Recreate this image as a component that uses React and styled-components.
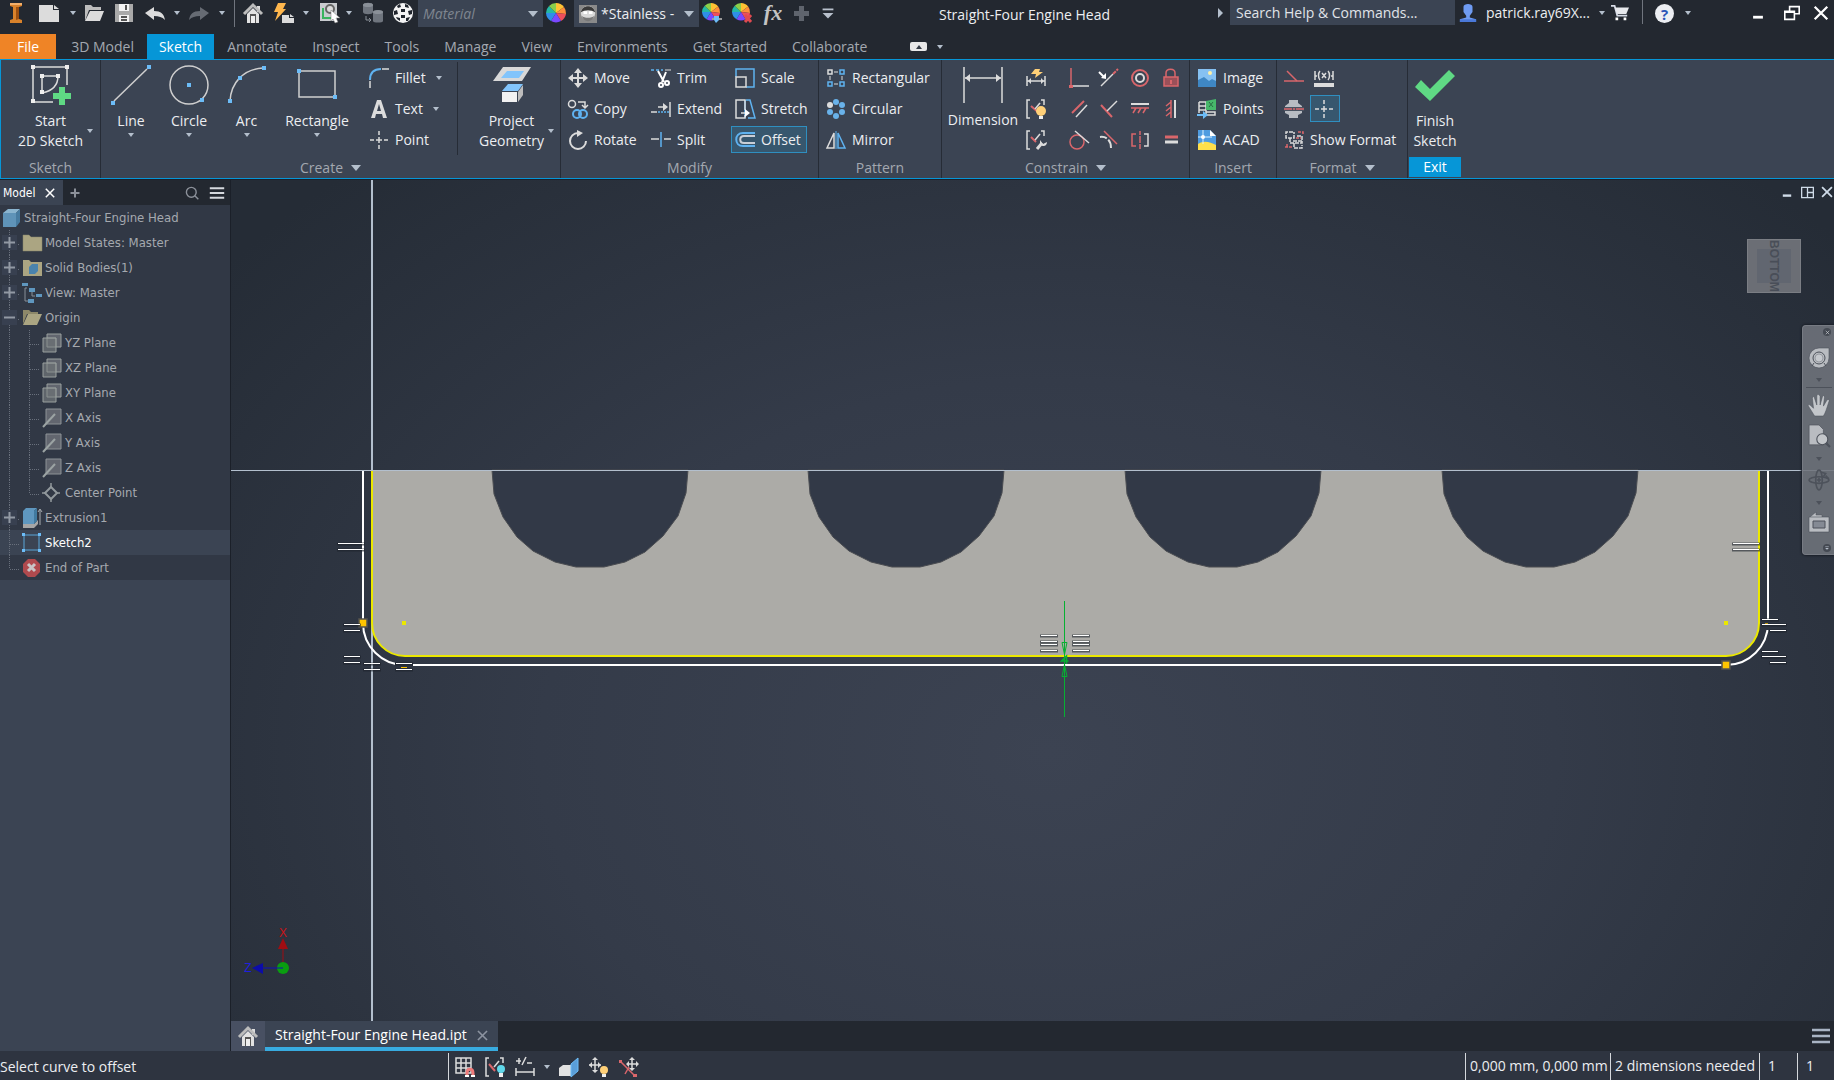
import React from "react";
import styled, { createGlobalStyle, css } from "styled-components";

const W = "#dcdcdc";
const B = "#6cbcf7";
const R = "#d9666b";
const G = "#5fd984";

const icons = {
  logo: (
    <>
      <path d="M4 0h12v3l-3 1v12l3 1v3H4v-3l3-1V4L4 3z" fill="#d9822b" />
      <path d="M10 4h3v12l-3 1z" fill="#9c4f10" />
      <path d="M4 0h12v2H4z" fill="#f3b06b" />
    </>
  ),
  newDoc: <path d="M0 2h14v5h6v12H0zM15 2l5 4h-5z" fill={W} />,
  open: (
    <>
      <path d="M1 2h6l2 2h8v3H5L1 18z" fill="#bdbdbd" />
      <path d="M6 8h14l-4 10H1z" fill={W} />
    </>
  ),
  save: (
    <>
      <path d="M1 1h18v18H1z" fill="#a9a9a9" />
      <path d="M5 1h10v7H5zM5 12h10v7H5z" fill="#f2f2f2" />
      <path d="M12 2v5M7 14h6M7 17h6" stroke="#555" strokeWidth="2" />
    </>
  ),
  undo: <path d="M0 10l9-6v4c7 0 10 3 11 9-3-3-6-4-11-4v4z" fill={W} />,
  redo: <path d="M20 10l-9-6v4C4 8 1 11 0 17c3-3 6-4 11-4v4z" fill="#666b73" />,
  home: (
    <>
      <path d="M14 3h3v6h-3z" fill={W} />
      <path d="M1 11l9-9 9 9" fill="none" stroke="#bcbcbc" strokeWidth="3" />
      <path d="M4 11l6-6 6 6v9H4z" fill="#e2e2e2" />
      <path d="M7 11h6v9H7z" fill="#555" />
      <path d="M8 13h4v7H8z" fill="#eee" />
    </>
  ),
  bolt: (
    <>
      <path d="M4 0h8L9 6h3L1 18l3-9H0z" fill="#ffb74d" />
      <path d="M8 12h7v3h5v5H8zM16 11l4 3h-4z" fill={W} />
    </>
  ),
  select: (
    <>
      <path d="M0 0h17v18H0z" fill="#c9ccd0" />
      <path d="M3 5v10h9" stroke="#39b45e" strokeWidth="2" fill="none" />
      <circle cx="10" cy="6" r="4" stroke="#666" strokeWidth="2" fill="#ddd" />
      <path d="M11 7l9 8h-4l2 4-3 1-2-4-2 2z" fill="#fff" stroke="#777" strokeWidth=".5" />
    </>
  ),
  cylinders: (
    <>
      <path d="M0 2c0-3 10-3 10 0v7c0 3-10 3-10 0z" fill="#6f757e" />
      <path d="M10 9c0-2 10-2 10 0v9c0 2-10 2-10 0z" fill="#6f757e" />
      <ellipse cx="5" cy="2" rx="5" ry="2" fill="#8a9098" />
      <ellipse cx="15" cy="9" rx="5" ry="2" fill="#8a9098" />
      <path d="M3 13v4h5M6 15l2 2-2 2" stroke="#8a9098" fill="none" />
    </>
  ),
  ball: (
    <>
      <circle cx="10" cy="10" r="10" fill="#f4f4f4" />
      <path
        d="M4 3l3-2 1 3-3 1zM12 1l3 1 1 3-4-1zM8 6h4v3H8zM1 8l3-1 1 4-4 1zM15 8l4-1v4l-3 1zM8 12h4v3H8zM3 14l4 1v3l-3-2zM13 15l4-1-2 4-2 0z"
        fill="#1f242c"
      />
    </>
  ),
  wheel: (
    <>
      <path d="M10 10L10 0A10 10 0 0 1 18 4z" fill="#ffc233" />
      <path d="M10 10L18 4A10 10 0 0 1 20 11z" fill="#ff8f3c" />
      <path d="M10 10L20 11A10 10 0 0 1 15 18z" fill="#ee4f5b" />
      <path d="M10 10L15 18A10 10 0 0 1 5 18z" fill="#7b48ff" />
      <path d="M10 10L5 18A10 10 0 0 1 0 10z" fill="#2f8ee8" />
      <path d="M10 10L0 10A10 10 0 0 1 3 3z" fill="#25b9a5" />
      <path d="M10 10L3 3A10 10 0 0 1 10 0z" fill="#8bcf4a" />
    </>
  ),
  metal: (
    <>
      <path d="M0 0h20v20H0z" fill="#8a8a8a" />
      <circle cx="10" cy="9" r="8" fill="#d9d9d9" />
      <path d="M2 8c2-9 14-9 16 0-4-3-12-3-16 0z" fill="#3a3a3a" />
      <path d="M5 7h4v3H5zM11 7h4v3h-4z" fill="#fff" />
      <path d="M3 12c3 3 11 3 14 0-2 8-12 8-14 0z" fill="#777" />
    </>
  ),
  plus: <path d="M8 3h5v5h5v5h-5v5H8v-5H3V8h5z" fill="#5f646d" />,
  overflow: (
    <>
      <path d="M4 5h12v2H4z" fill="#b8c0cc" />
      <path d="M4 10h12l-6 6z" fill="#b8c0cc" />
    </>
  ),
  user: (
    <>
      <path d="M5 3c0-4 10-4 10 0v6l-3 4v2l7 2v3H1v-3l7-2v-2L5 9z" fill="#6f9bf2" />
      <path d="M1 17h18v3H1z" fill="#4a78d8" />
    </>
  ),
  cart: (
    <>
      <path d="M0 2h4l3 11h11" fill="none" stroke="#d6dbe6" strokeWidth="2" />
      <path d="M4 4h16l-3 7H7z" fill="#e6e8ec" />
      <path d="M5 15h3v3H5zM14 15h3v3h-3z" fill="#fff" />
    </>
  ),
  start2d: (
    <>
      <path d="M2 3v34M2 2h34v18M2 37h20M11 11v17M11 11h16M27 11c0 9-6 15-16 17" fill="none" stroke={W} strokeWidth="1.5" />
      <path d="M0 0h4v4H0zM34 0h4v4h-4zM0 34h4v4H0zM9 9h4v4H9zM25 9h4v4h-4zM9 25h4v4H9z" fill="#eee" />
      <path d="M28 22h6v6h6v6h-6v6h-6v-6h-6v-6h6z" fill={G} />
    </>
  ),
  line: (
    <>
      <path d="M3 36L36 4" stroke="#cfcfcf" strokeWidth="1.5" />
      <path d="M0 36h4v4H0zM36 0h4v4h-4z" fill={B} />
    </>
  ),
  circle: (
    <>
      <circle cx="20" cy="20" r="19" fill="none" stroke="#cfcfcf" strokeWidth="1.5" />
      <path d="M18 18h4v4h-4zM31 33h4v4h-4z" fill={B} />
    </>
  ),
  arc: (
    <>
      <path d="M3 36C4 18 16 4 36 3" fill="none" stroke="#cfcfcf" strokeWidth="1.5" />
      <path d="M1 34h4v4H1zM35 1h4v4h-4zM11 11h4v4h-4z" fill={B} />
    </>
  ),
  rect: (
    <>
      <path d="M2 6h36v26H2z" fill="none" stroke="#cfcfcf" strokeWidth="1.5" />
      <path d="M0 4h4v4H0zM36 30h4v4h-4z" fill={B} />
    </>
  ),
  project: (
    <>
      <path d="M11 2h28l-9 14H1z" fill="#d9d9d9" />
      <path d="M15 6h17l-5 7H9z" fill="#82c4fb" />
      <path d="M10 26l6-7h15l-5 7z" fill="#82c4fb" />
      <path d="M10 27h15v10H10z" fill="#f2f2f2" />
      <path d="M26 27l5-7v10l-5 7z" fill="#bdbdbd" />
    </>
  ),
  dimension: (
    <>
      <path d="M1 2v36M39 2v36M2 13h36" stroke={W} strokeWidth="1.5" />
      <path d="M2 13l5-4v8zM38 13l-5-4v8z" fill={W} />
    </>
  ),
  check: <path d="M0 22l6-7 9 9L34 5l6 6-25 25z" fill={G} />,
  fillet: (
    <>
      <path d="M1 12C1 5 5 1 12 1" fill="none" stroke="#5fb2f0" strokeWidth="2" />
      <path d="M13 1h7M1 13v7" stroke={W} strokeWidth="1.5" />
    </>
  ),
  textA: <path d="M8 1h4l6 18h-4l-1-4H7l-1 4H2zM10 5l-2 7h4z" fill={W} fillRule="evenodd" />,
  point: <path d="M10 1v4M10 15v4M1 10h4M15 10h4M7 10h6M10 7v6" stroke={W} strokeWidth="1.5" />,
  move: (
    <>
      <path d="M10 3v14M3 10h14" stroke={W} strokeWidth="2" />
      <path d="M10 0l4 5H6zM10 20l4-5H6zM0 10l5-4v8zM20 10l-5-4v8z" fill={W} />
    </>
  ),
  copy: (
    <>
      <circle cx="4" cy="5" r="3.5" fill="none" stroke={W} strokeWidth="1.5" />
      <path d="M10 3h7v5M14 6l3 3 3-3" fill="none" stroke={W} strokeWidth="1.5" />
      <circle cx="9" cy="15" r="4" fill="none" stroke="#5fb2f0" strokeWidth="2" />
      <circle cx="15" cy="15" r="4" fill="none" stroke="#5fb2f0" strokeWidth="2" />
    </>
  ),
  rotate: (
    <>
      <path d="M10 3a8 8 0 1 0 8 8" fill="none" stroke={W} strokeWidth="2" />
      <path d="M9 0l6 3-6 4z" fill={W} />
    </>
  ),
  trim: (
    <>
      <path d="M0 2h12" stroke="#5fb2f0" strokeWidth="1.5" strokeDasharray="3 2" />
      <path d="M14 2h6" stroke={W} />
      <path d="M7 3l6 11M15 4l-4 10" stroke="#fff" strokeWidth="2" />
      <circle cx="10" cy="17" r="2" fill="none" stroke="#fff" strokeWidth="2" />
      <circle cx="16" cy="15" r="2" fill="none" stroke="#fff" strokeWidth="2" />
    </>
  ),
  extend: (
    <>
      <path d="M19 3v15M7 8h7" stroke={W} strokeWidth="1.5" />
      <path d="M12 4l5 4-5 4z" fill={W} />
      <path d="M0 13h6" stroke={W} strokeWidth="1.5" />
      <path d="M7 13h11" stroke="#5fb2f0" strokeWidth="1.5" strokeDasharray="2 1" />
    </>
  ),
  split: (
    <>
      <path d="M0 9h8M13 9h7" stroke={W} strokeWidth="1.5" />
      <path d="M10 2v15" stroke="#5fb2f0" strokeWidth="1.5" />
    </>
  ),
  scale: (
    <>
      <path d="M1 9V1h18v18h-8" fill="none" stroke="#5fb2f0" strokeWidth="1.5" />
      <path d="M1 9h10v10H1z" fill="none" stroke={W} strokeWidth="1.5" />
    </>
  ),
  stretch: (
    <>
      <path d="M11 1h4l5 18h-7M10 19V1" fill="none" stroke="#5fb2f0" strokeWidth="1.5" />
      <path d="M10 11V1H1v18h9v-3M6 14h6" fill="none" stroke={W} strokeWidth="1.5" />
      <path d="M10 10l5 4-5 4z" fill="#fff" />
    </>
  ),
  offset: (
    <>
      <path d="M20 3H8C-1 3-1 16 8 16h12" fill="none" stroke="#5fb2f0" strokeWidth="2" />
      <path d="M20 6H9c-5 0-5 7 0 7h11" fill="none" stroke="#c9ced6" strokeWidth="2" />
    </>
  ),
  rectPattern: (
    <>
      <path d="M2 2h4v4H2z" stroke={W} fill="none" strokeWidth="1.5" />
      <path d="M14 2h4v4h-4zM2 14h4v4H2zM14 14h4v4h-4z" stroke="#5fb2f0" fill="none" strokeWidth="1.5" />
      <path d="M8 4h4M8 16h4M4 8v4M16 8v4" stroke={W} />
    </>
  ),
  circPattern: (
    <>
      <circle cx="4" cy="6" r="3" fill={W} />
      <g fill="#69b2ea">
        <circle cx="10" cy="3" r="3" />
        <circle cx="16" cy="6" r="3" />
        <circle cx="16" cy="13" r="3" />
        <circle cx="10" cy="17" r="3" />
        <circle cx="4" cy="13" r="3" />
      </g>
    </>
  ),
  mirror: (
    <>
      <path d="M8 3v15H1z" fill="none" stroke={W} strokeWidth="1.5" />
      <path d="M12 3v15h7z" fill="none" stroke="#5fb2f0" strokeWidth="1.5" />
      <path d="M10 1v18" stroke="#5fb2f0" />
    </>
  ),
  autoDim: (
    <>
      <path d="M1 8v10M19 8v10M1 13h18" stroke={W} strokeWidth="1.5" />
      <path d="M5 10v6l-3-3zM15 10v6l3-3z" fill={W} />
      <path d="M9 1h5l-1 3h4l-8 6 1-4H5z" fill="#ffd078" />
    </>
  ),
  showCon: (
    <>
      <path d="M4 1H1v18h3M15 1h3v5" fill="none" stroke={W} strokeWidth="1.5" />
      <path d="M5 7l8 7" stroke={R} strokeWidth="2" />
      <path d="M14 4L9 10" stroke={W} strokeWidth="1.5" />
      <circle cx="15" cy="12" r="5" fill="#ffd078" />
      <path d="M13 17h4v3h-4z" fill="#eee" />
    </>
  ),
  conSettings: (
    <>
      <path d="M4 1H1v18h3M15 1h3v5" fill="none" stroke={W} strokeWidth="1.5" />
      <path d="M5 7l5 5" stroke={R} strokeWidth="2" />
      <path d="M14 4L9 10" stroke={W} strokeWidth="1.5" />
      <path d="M11 19l5-6" stroke={W} strokeWidth="3" />
      <path d="M14 10l3 4 4-2c0 5-5 5-7 2z" fill={W} />
    </>
  ),
  coincident: (
    <>
      <path d="M2 0v17" stroke={R} strokeWidth="1.5" />
      <path d="M4 18h16" stroke={W} strokeWidth="1.5" />
      <path d="M0 17h4v3H0z" fill={R} />
    </>
  ),
  collinear: (
    <>
      <path d="M2 18L14 6" stroke={W} strokeWidth="1.5" />
      <path d="M14 6l5-5" stroke={R} strokeWidth="2" strokeDasharray="4 1" />
      <path d="M0 4l5 5" stroke="#fff" strokeWidth="2" />
      <path d="M7 11V5L2 10z" fill="#fff" />
    </>
  ),
  concentric: (
    <>
      <circle cx="10" cy="10" r="8" fill="none" stroke={R} strokeWidth="2" />
      <circle cx="10" cy="10" r="4" fill="none" stroke={W} strokeWidth="2" />
    </>
  ),
  lock: (
    <>
      <path d="M5 9V5c0-5 9-5 9 0v4" fill="none" stroke={R} strokeWidth="1.5" />
      <path d="M3 9h14v9H3z" fill="#9a5059" stroke={R} strokeWidth="1.5" />
      <path d="M10 12v4" stroke={R} strokeWidth="2" />
    </>
  ),
  parallel: (
    <>
      <path d="M3 14L15 2" stroke={R} strokeWidth="2" />
      <path d="M7 18L18 6" stroke={W} strokeWidth="1.5" />
    </>
  ),
  perpendicular: (
    <>
      <path d="M2 6l11 12" stroke={R} strokeWidth="2" />
      <path d="M18 2L8 12" stroke={W} strokeWidth="1.5" />
    </>
  ),
  horizontal: (
    <>
      <path d="M1 5h18" stroke={W} strokeWidth="2" />
      <path d="M1 9h18M6 9l-3 5M11 9l-3 5M16 9l-3 5" stroke={R} strokeWidth="1.5" />
    </>
  ),
  vertical: (
    <>
      <path d="M14 1v18" stroke={W} strokeWidth="2" />
      <path d="M10 1v18M10 3L5 7M10 8l-5 4M10 13l-5 4" stroke={R} strokeWidth="1.5" />
    </>
  ),
  tangent: (
    <>
      <circle cx="8" cy="12" r="7" fill="none" stroke={R} strokeWidth="1.5" />
      <path d="M6 1l14 12" stroke={W} strokeWidth="1.5" />
    </>
  ),
  smooth: (
    <>
      <path d="M5 1l13 13" stroke={R} strokeWidth="1.5" />
      <path d="M1 7c7-1 11 4 11 11" fill="none" stroke={W} strokeWidth="2" strokeDasharray="7 2 9" />
    </>
  ),
  symmetric: (
    <>
      <path d="M6 4H2v12h4" fill="none" stroke={R} strokeWidth="1.5" />
      <path d="M10 1v18" stroke={R} strokeWidth="1.5" strokeDasharray="4 1 7 1 5" />
      <path d="M14 4h4v12h-4" fill="none" stroke={W} strokeWidth="1.5" />
    </>
  ),
  equal: (
    <>
      <path d="M4 7h13" stroke={R} strokeWidth="3" />
      <path d="M4 12h13" stroke={W} strokeWidth="3" />
    </>
  ),
  image: (
    <>
      <path d="M1 1h18v18H1z" fill="#86c1f2" />
      <path d="M1 12l6-3 5 4 3-2 4 2v6H1z" fill="#3f87c4" />
      <circle cx="13" cy="5" r="2" fill="#fff0a8" />
    </>
  ),
  points: (
    <>
      <path d="M2 3h7v14M2 3v11M2 7h7M2 11h7M9 16h9v-3H9" fill="none" stroke={W} strokeWidth="1.5" />
      <path d="M9 2l10-2v11H9z" fill="#47b86b" />
      <path d="M12 3l4 5M16 3l-4 5" stroke="#2a6d44" />
      <path d="M0 15h6v-3l5 4-5 4v-3H0z" fill={B} />
    </>
  ),
  acad: (
    <>
      <path d="M1 0h12l6 6v14H1z" fill="#4f9ce0" />
      <path d="M1 14c6-4 12-2 18 1v5H1z" fill="#ffe04a" />
      <path d="M1 7h14M6 0v14" stroke="#d9f0ff" />
      <circle cx="6" cy="7" r="2" fill="#fff" />
      <path d="M13 0l6 6h-6z" fill="#fff" />
    </>
  ),
  construction: (
    <>
      <path d="M0 13h20" stroke={R} strokeWidth="1.5" />
      <path d="M3 3l10 10" stroke={R} strokeWidth="1.5" />
    </>
  ),
  driven: (
    <>
      <path d="M1 3v9M19 3v9M1 8h2M17 8h2M6 3c-2 2-2 7 0 9M14 3c2 2 2 7 0 9M8 5l4 5M12 5l-4 5" fill="none" stroke={W} strokeWidth="1.5" />
      <path d="M0 15h20v4H0z" fill={W} />
    </>
  ),
  centerline: (
    <>
      <path d="M5 1h9v3l4 3v7l-4 2v3H5v-3l-4-2V7l4-3z" fill="#b8bcc2" />
      <path d="M0 8h20v4H0z" fill="#4a5361" />
      <path d="M0 10h20" stroke={R} strokeWidth="1.5" strokeDasharray="8 1 2 1" />
    </>
  ),
  showFormat: (
    <>
      <path d="M9 2H2v6h8V2M6 8v5h12V6h-5M9 11h9M10 13v5h8v-3" fill="none" stroke={W} strokeWidth="1.5" strokeDasharray="4 1" />
      <path d="M14 2h5v3M3 17v-4M1 17h8M12 8h5" fill="none" stroke={R} strokeWidth="1.5" strokeDasharray="3 1" />
    </>
  ),
  cube: (
    <>
      <path d="M2 5l5-4h12l-4 4z" fill="#8ab4cf" />
      <path d="M2 5h13v14H2z" fill="#5f93b8" />
      <path d="M15 5l4-4v13l-4 5z" fill="#477ba0" />
    </>
  ),
  folder: <path d="M1 2h6l2 2h11v14H1z" fill="#aba582" stroke="#8b8668" strokeWidth=".5" />,
  bodies: (
    <>
      <path d="M1 2h6l2 2h11v14H1z" fill="#aba582" />
      <path d="M7 9l3-3h6v7l-3 3H7z" fill="#4a83ad" />
    </>
  ),
  view: (
    <>
      <path d="M5 5H3v13h3M10 7v6h3" fill="none" stroke="#888f99" />
      <path d="M0 0h6v3H0zM7 5h6v4H7zM14 11h6v3h-6zM6 16h6v4H6z" fill="#5f97bf" />
    </>
  ),
  folderOpen: (
    <>
      <path d="M1 2h6l2 2h7v2H5L1 16z" fill="#8d8869" />
      <path d="M6 6h14l-5 11H1z" fill="#aba582" />
    </>
  ),
  plane: (
    <>
      <path d="M5 1h14v13H5z" fill="#62666f" stroke="#9aa09f" />
      <path d="M1 5h13v14H1z" fill="#6c7074" fillOpacity=".8" stroke="#9aa09f" />
      <path d="M5 5h9v9H5z" fill="none" stroke="#9aa09f" strokeWidth=".5" />
    </>
  ),
  axis: (
    <>
      <path d="M4 1h15v15H4z" fill="#62666f" stroke="#8d9297" />
      <path d="M1 19L13 6" stroke="#9ba3a3" strokeWidth="2" />
    </>
  ),
  centerPoint: (
    <>
      <path d="M9 4l6 6-6 6-6-6z" fill="none" stroke="#91989c" strokeWidth="2" />
      <path d="M9 0v4M9 16v3M0 10h3M15 10h3" stroke="#91989c" strokeWidth="1.5" />
    </>
  ),
  extrusion: (
    <>
      <path d="M1 16h11l4-4v4l-4 4H1z" fill="#a6a6a6" />
      <path d="M1 3l3-3h11l-3 3v13H1z" fill="#5f97bf" />
      <path d="M12 3l3-3v13l-3 3z" fill="#417aa0" />
      <path d="M18 2v15M16 4l2-3 2 3" fill="none" stroke="#a7abb0" />
    </>
  ),
  sketch: (
    <>
      <path d="M2 2h15v15H2z" fill="none" stroke="#5ba5d8" />
      <path d="M0 0h3v3H0zM16 0h3v3h-3zM0 16h3v3H0zM16 16h3v3h-3z" fill={B} />
    </>
  ),
  endPart: (
    <>
      <path d="M6 1h7l5 5v8l-5 5H6l-5-5V6z" fill="#b04a4e" />
      <path d="M6 6l7 7M13 6l-7 7" stroke="#c9c4c6" strokeWidth="3" />
    </>
  ),
  gridSnap: (
    <>
      <path d="M1 1h15v15H1zM6 1v15M11 1v15M1 6h15M1 11h15" fill="none" stroke={W} strokeWidth="1.5" />
      <path d="M12 20v-4c0-5 6-5 6 0v4" fill="none" stroke="#ee7b7b" strokeWidth="3" />
      <path d="M10 18h4v2h-4zM16 18h4v2h-4z" fill="#fff" />
    </>
  ),
  conStatus: (
    <>
      <path d="M4 1H1v18h3M15 1h3v5" fill="none" stroke={W} strokeWidth="1.5" />
      <path d="M4 7l6 7" stroke={R} strokeWidth="2" />
      <path d="M14 4L9 10" stroke={W} strokeWidth="1.5" />
      <circle cx="16" cy="12" r="4" fill="#5fd7ea" />
      <path d="M14 16h4v4h-4z" fill="#eee" />
    </>
  ),
  tolerance: (
    <>
      <path d="M1 11v8M19 11v8M1 15h18" stroke={W} strokeWidth="1.5" />
      <path d="M1 4h5M4 1v6M7 8l4-8M12 6h5" stroke={W} strokeWidth="1.5" />
    </>
  ),
  slice: (
    <>
      <path d="M0 11l4-3h8v11H0z" fill="#e2e2e2" />
      <path d="M12 7l7-6v13l-7 6z" fill="#5a9ed8" stroke={B} />
    </>
  ),
  dragHint: (
    <>
      <path d="M6 2v12M0 8h12" stroke={W} strokeWidth="1.5" />
      <path d="M6 0l3 3H3zM6 16l3-3H3zM0 8l3-3v6zM12 8L9 5v6z" fill={W} />
      <circle cx="15" cy="13" r="4" fill="#ffd078" />
      <path d="M13 17h4v3h-4z" fill="#eee" />
    </>
  ),
  relax: (
    <>
      <path d="M1 4l15 15M6 17l4-7" stroke={R} strokeWidth="1.5" />
      <path d="M13 2v10M8 7h10" stroke={W} strokeWidth="1.5" />
      <path d="M13 0l3 3h-6zM13 14l3-3h-6zM7 7l3-3v6zM20 7l-3-3v6z" fill={W} />
      <path d="M0 3h3v3H0zM14 17h4v3h-4z" fill={R} />
    </>
  ),
  search: (
    <>
      <circle cx="9" cy="9" r="7" fill="none" stroke="#8c919a" strokeWidth="2" />
      <path d="M14 14l5 5" stroke="#8c919a" strokeWidth="2" />
    </>
  ),
  menu: <path d="M1 4h18M1 10h18M1 16h18" stroke="currentColor" strokeWidth="2.5" />,
  close: <path d="M3 3l14 14M17 3L3 17" stroke="currentColor" strokeWidth="2.5" />,
  add: <path d="M10 1v18M1 10h18" stroke="#8c919a" strokeWidth="4" />,
  minimize: <path d="M3 14h14v4H3z" fill="currentColor" />,
  restore: <path d="M7 8V2h12v9h-6M1 8h12v10H1zM1 9h12" fill="none" stroke="currentColor" strokeWidth="2" />,
  tiles: <path d="M1 2h18v16H1zM10 2v16M10 10h9" fill="none" stroke="currentColor" strokeWidth="2" />,
  wheelNav: (
    <>
      <path d="M10 0h10v10A10 10 0 1 1 10 0z" fill="#b9bcc1" stroke="#4c515a" strokeWidth=".6" />
      <circle cx="10" cy="10" r="6" fill="#b9bcc1" stroke="#4c515a" />
      <circle cx="10" cy="10" r="4" fill="#c5c8cd" stroke="#6c7179" strokeWidth=".5" />
      <path d="M5 15l-2 3M15 15l2 3" stroke="#4c515a" />
    </>
  ),
  hand: (
    <path
      d="M6 20L1 12c-2-3 0-3 2-1l2 2L4 4c0-2 2-2 2 0l2 6 0-8c0-2 2-2 3 0v8l2-7c0-2 2-2 2 0l-1 8 3-5c1-2 3-1 2 1-2 6-3 10-5 13z"
      fill="#c3c6ca"
      stroke="#4c515a"
      strokeWidth=".5"
    />
  ),
  zoomNav: (
    <>
      <path d="M1 0h9l4 4v14H1z" fill="#b9bcc1" stroke="#4c515a" strokeWidth=".6" />
      <path d="M16 16l4 4" stroke="#4c515a" strokeWidth="2" />
      <circle cx="13" cy="13" r="5" fill="#c3c6ca" stroke="#4c515a" />
    </>
  ),
  orbit: (
    <g fill="none" stroke="#4d525b" strokeWidth="1.5">
      <ellipse cx="10" cy="10" rx="9" ry="3" />
      <ellipse cx="10" cy="10" rx="3" ry="9" />
      <path d="M12 3l4 1-2 3M8 10h4M10 8v4M16 6l3 3" />
    </g>
  ),
  lookAt: (
    <>
      <path d="M1 5l6-5v3h6v2" fill="#b9bcc1" stroke="#4c515a" strokeWidth=".5" />
      <path d="M0 5h20v15H0z" fill="#b9bcc1" stroke="#4c515a" strokeWidth=".6" />
      <path d="M4 9h12v7H4z" fill="#858a94" stroke="#4c515a" />
    </>
  ),
};

const Svg = styled.svg`
  display: block;
  flex: none;
  width: ${(p) => p.$s}px;
  height: ${(p) => p.$s}px;
  overflow: visible;
`;

const Icon = ({ name, size = 20 }) => (
  <Svg $s={size} viewBox={size === 40 ? "0 0 40 40" : "0 0 20 20"} aria-hidden="true">
    {icons[name]}
  </Svg>
);

const Global = createGlobalStyle`
  * { box-sizing: border-box; }
  body { margin: 0; background: #232830; }
  button, input, select {
    font: inherit;
    color: inherit;
    background: none;
    border: 0;
    border-radius: 0;
    padding: 0;
    margin: 0;
  }
  ul { list-style: none; margin: 0; padding: 0; }
`;

const Page = styled.div`
  display: flex;
  flex-direction: column;
  min-height: 100vh;
  overflow: hidden;
  font-family: "Open Sans", "Noto Sans", sans-serif;
  font-size: 14px;
  line-height: 20px;
  color: #eceef1;
  white-space: nowrap;
`;

const Caret = styled.span`
  flex: none;
  width: 0;
  height: 0;
  border: ${(p) => p.$s || 3}px solid transparent;
  border-top: ${(p) => (p.$s || 3) + 1}px solid #b4bfcc;
  border-bottom: 0;
`;

/* title bar */

const TitleBar = styled.header`
  display: flex;
  align-items: flex-start;
  height: 34px;
  background: #232830;
`;

const Tool = styled.button`
  display: flex;
  align-items: center;
  justify-content: center;
  flex: none;
  width: ${(p) => p.$w || 30}px;
  height: 26px;
`;

const Rule = styled.span`
  flex: none;
  width: 1px;
  height: ${(p) => p.$h}px;
  background: #70757e;
`;

const Combo = styled.label`
  display: flex;
  align-items: center;
  gap: 4px;
  flex: none;
  width: 125px;
  height: 27px;
  padding: 0 5px;
  margin-left: 5px;
  background: #3b4453;
  color: ${(p) => (p.$muted ? "#7f8690" : "#eceef1")};
  font-style: ${(p) => (p.$muted ? "italic" : "normal")};
  select {
    flex: 1;
    min-width: 0;
    appearance: none;
    outline: 0;
  }
`;

const Title = styled.h1`
  flex: 1;
  margin: 0;
  padding: 5px 10px 0 0;
  text-align: center;
  font-size: 14px;
  font-weight: 400;
  line-height: 20px;
`;

const SearchCaret = styled.span`
  width: 0;
  height: 0;
  margin: 8px 7px 0 0;
  border: 5px solid transparent;
  border-left-color: #b4bfcc;
  border-right: 0;
`;

const SearchBox = styled.input`
  flex: none;
  width: 225px;
  height: 25px;
  padding: 0 6px;
  background: #3b4453;
  &::placeholder {
    color: #e0e3e8;
    opacity: 1;
  }
`;

const User = styled.button`
  display: flex;
  align-items: center;
  gap: 9px;
  height: 26px;
  width: 143px;
  padding-left: 4px;
`;

const Help = styled.span`
  display: grid;
  place-items: center;
  width: 19px;
  height: 19px;
  border-radius: 50%;
  background: #eceef2;
  color: #2a55b8;
  font-size: 15px;
  font-weight: 700;
`;

const Fx = styled.span`
  font: italic 700 22px/22px "Liberation Serif", serif;
  color: #c4c4c4;
`;

const WindowTools = styled.div`
  display: flex;
  flex: none;
  margin-left: 50px;
  color: #fff;
`;

/* ribbon */

const TabBar = styled.nav`
  display: flex;
  align-items: stretch;
  height: 25px;
  color: #a3a8b0;
`;

const Tab = styled.button`
  flex: none;
  padding: 0 ${(p) => (p.$file ? 17 : 12)}px;
  margin-right: ${(p) => (p.$file ? 3 : 1)}px;
  ${(p) =>
    p.$file &&
    css`
      background: #ef8426;
      color: #fff;
    `}
  ${(p) =>
    p.$active &&
    css`
      background: #0696d7;
      color: #fff;
    `}
`;

const Toggle = styled.button`
  display: flex;
  align-items: center;
  gap: 10px;
  margin-left: 30px;
  span:first-child {
    display: grid;
    place-items: center;
    width: 17px;
    height: 9px;
    border-radius: 2px;
    background: #e8e8e8;
  }
  i {
    border: 3px solid transparent;
    border-bottom: 4px solid #333a45;
    border-top: 0;
  }
`;

const Ribbon = styled.section`
  display: flex;
  border: 1px solid #0696d7;
  border-right: 0;
  background: #3b4453;
`;

const Group = styled.div`
  display: flex;
  flex-direction: column;
  flex: none;
  width: ${(p) => p.$w}px;
  border-right: ${(p) => (p.$last ? 0 : 1)}px solid #262c36;
`;

const GroupBody = styled.div`
  display: flex;
  flex: 1;
  padding: 2px 0 2px ${(p) => p.$pad || 0}px;
`;

const GroupLabel = styled.div`
  display: flex;
  align-items: center;
  justify-content: center;
  gap: 8px;
  height: 21px;
  color: #a3a8b0;
`;

const ExitLabel = styled(GroupLabel)`
  width: 52px;
  height: 20px;
  margin: 0 0 1px 1px;
  background: #0696d7;
  color: #fff;
`;

const Big = styled.button`
  display: flex;
  flex-direction: column;
  align-items: center;
  flex: none;
  width: ${(p) => p.$w}px;
  padding-top: 3px;
  line-height: 20px;
`;

const BigText = styled.span`
  display: grid;
  grid-template-columns: 1fr auto 1fr;
  align-items: center;
  gap: 4px;
  margin-top: ${(p) => p.$gap || 6}px;
  &::before {
    content: "";
  }
`;

const BigCaret = styled.span`
  margin-top: 2px;
  display: flex;
`;

const Stack = styled.div`
  display: grid;
  grid-auto-rows: 31px;
  align-items: center;
  justify-items: start;
  grid-template-columns: ${(p) => p.$cols || "auto"};
`;

const Small = styled.button`
  display: flex;
  align-items: center;
  gap: 6px;
  height: 27px;
  padding: 0 3px;
  border: 1px solid transparent;
  > span {
    margin-left: 4px;
  }
  ${(p) =>
    p.$on &&
    css`
      background: #37576e;
      border-color: #2f8fc0;
      padding-right: 5px;
    `}
`;

const InnerGap = styled.span`
  width: 6px;
`;

const InnerRule = styled.span`
  width: 1px;
  margin: 0 5px 0 auto;
  background: #262c36;
`;

const Cmd = ({ icon, children, on, caret, label }) => (
  <Small $on={on} aria-label={label}>
    <Icon name={icon} />
    {children}
    {caret && <Caret />}
  </Small>
);

const BigCmd = ({ icon, lines, w, side, below, gap }) => (
  <Big $w={w}>
    <Icon name={icon} size={40} />
    <BigText $gap={gap}>
      <span>
        {lines.map((l) => (
          <div key={l}>{l}</div>
        ))}
      </span>
      {side && <Caret />}
    </BigText>
    {below && (
      <BigCaret>
        <Caret />
      </BigCaret>
    )}
  </Big>
);

/* model browser */

const Work = styled.main`
  display: flex;
  flex: 1;
  border-top: 1px solid #1d2129;
`;

const Browser = styled.aside`
  flex: none;
  width: 231px;
  background: #3b4453;
  border-right: 1px solid #1b2029;
`;

const BrowserHead = styled.div`
  display: flex;
  align-items: center;
  height: 25px;
  background: #232830;
  color: #d5d8dd;
`;

const BrowserTab = styled.button`
  display: flex;
  align-items: center;
  gap: 9px;
  width: 63px;
  height: 25px;
  margin-right: 6px;
  padding-left: 3px;
  background: #3b4453;
  color: #fff;
  font: 12px/20px "DejaVu Sans Condensed", "DejaVu Sans", sans-serif;
`;

const BrowserTools = styled.div`
  display: flex;
  gap: 10px;
  margin: 0 5px 0 auto;
`;

const Tree = styled.ul`
  background: #313845;
  color: #a5a9af;
  font: 13px/25px "DejaVu Sans Condensed", "DejaVu Sans", sans-serif;
`;

const Row = styled.li`
  display: flex;
  align-items: center;
  gap: 3px;
  height: 25px;
  padding-left: ${(p) => (p.$root ? 1 : 0)}px;
  ${(p) =>
    p.$selected &&
    css`
      background: #3b4453;
      color: #fff;
    `}
`;

const dots = "#69707c 0 1px, transparent 1px 2px";

const Branch = styled.span`
  display: flex;
  align-items: center;
  flex: none;
  width: 20px;
  height: 25px;
  margin-right: ${(p) => (p.$trunk ? -3 : -1)}px;
  padding-left: 2px;
  background-repeat: no-repeat;
  background-image: repeating-linear-gradient(${dots}),
    repeating-linear-gradient(90deg, ${dots});
  background-position: 9px 0, 10px 14px;
  background-size: 1px ${(p) => (p.$end ? "14px" : "100%")}, ${(p) => (p.$trunk ? 0 : 10)}px 1px;
`;

const Expander = styled.button`
  display: grid;
  place-items: center;
  width: 15px;
  height: 15px;
  background: #384050;
  svg {
    width: 11px;
    height: 11px;
  }
`;

const treeItems = [
  { text: "Model States: Master", icon: "folder", sign: "+" },
  { text: "Solid Bodies(1)", icon: "bodies", sign: "+" },
  { text: "View: Master", icon: "view", sign: "+" },
  { text: "Origin", icon: "folderOpen", sign: "-" },
  { text: "YZ Plane", icon: "plane", child: true },
  { text: "XZ Plane", icon: "plane", child: true },
  { text: "XY Plane", icon: "plane", child: true },
  { text: "X Axis", icon: "axis", child: true },
  { text: "Y Axis", icon: "axis", child: true },
  { text: "Z Axis", icon: "axis", child: true },
  { text: "Center Point", icon: "centerPoint", child: true, end: true },
  { text: "Extrusion1", icon: "extrusion", sign: "+" },
  { text: "Sketch2", icon: "sketch", selected: true },
  { text: "End of Part", icon: "endPart", end: true },
];

/* viewport */

const Stage = styled.section`
  display: flex;
  flex-direction: column;
  flex: 1;
  min-width: 0;
`;

const Viewport = styled.div`
  position: relative;
  flex: 1;
  background: radial-gradient(ellipse 66% 92% at 51% 68%, #3c4352 0%, #343b49 48%, #252c36 100%);
`;

const Drawing = styled.svg`
  display: block;
  width: 100%;
  height: 100%;
`;

const DocControls = styled.div`
  position: absolute;
  top: 0;
  right: 0;
  display: flex;
  gap: 6px;
  color: #cfdbe8;
`;

const DocButton = styled.button`
  display: grid;
  place-items: center;
  width: 14px;
  height: 24px;
`;

const ViewCube = styled.button`
  position: absolute;
  top: 59px;
  right: 33px;
  display: grid;
  place-items: center;
  width: 54px;
  height: 54px;
  background: #6b6e75;
  border: 1px solid #7b7e84;
  color: #494e58;
  span {
    display: flex;
    align-items: center;
    justify-content: center;
    width: 34px;
    height: 34px;
    background: #616670;
    writing-mode: vertical-rl;
    font: 700 12px/34px "Liberation Sans", sans-serif;
  }
`;

const NavBar = styled.div`
  position: absolute;
  top: 145px;
  right: 0;
  display: flex;
  flex-direction: column;
  align-items: center;
  width: 32px;
  height: 230px;
  border: 1px solid #777b83;
  border-right: 0;
  border-radius: 4px 0 0 4px;
  background: rgba(112, 116, 124, 0.88);
  box-shadow: 0 0 2px 1px #1b2029;
  hr {
    width: 26px;
    margin: 4px 0 6px;
    border: 0;
    border-top: 1px solid #4c515a;
  }
  > span {
    margin: 10px 0 1px;
    border-top-color: #4c515a;
  }
`;

const NavGap = styled.i`
  height: ${(p) => p.$h}px;
`;

const NavDot = styled.button`
  display: grid;
  place-items: center;
  align-self: flex-end;
  width: 8px;
  height: 8px;
  margin: ${(p) => (p.$low ? "12px 3px 0 0" : "2px 3px 12px 0")};
  border-radius: 50%;
  background: #454a53;
  color: #d0d3d8;
`;

const holePath =
  "M-98 470L-96 494L-87 517L-73 537L-57 551L-35 562L-14 567H14L35 562L55 552L73 536L88 516L96 493L98 470Z";

/* [x1, x2, y] of each stroke in the constraint glyphs */
const marks = [
  [338, 364, 543], [338, 364, 549],
  [344, 360, 624], [344, 360, 630],
  [344, 360, 656], [344, 360, 662],
  [364, 380, 663], [364, 380, 669],
  [396, 412, 663], [396, 412, 669],
  [1041, 1057, 635], [1041, 1057, 641], [1041, 1057, 644], [1041, 1057, 650],
  [1073, 1089, 635], [1073, 1089, 641], [1073, 1089, 644], [1073, 1089, 650],
  [1733, 1759, 543], [1733, 1759, 549],
  [1762, 1778, 619], [1762, 1786, 624], [1770, 1786, 630],
  [1762, 1778, 651], [1762, 1786, 656], [1770, 1786, 662],
];

const EngineHead = () => (
  <Drawing viewBox="231 180 1603 841" role="img" aria-label="Straight-Four Engine Head">
    <path d="M372 470H1759V623A33 33 0 0 1 1726 656H405A33 33 0 0 1 372 623Z" fill="#acaba7" />
    {[590, 906, 1223, 1540].map((cx) => (
      <path key={cx} d={holePath} transform={`translate(${cx} 0)`} fill="#323947" stroke="#4a4c51" />
    ))}
    <path d="M372 180V1021" stroke="#b3bfcd" strokeWidth="2" />
    <path d="M363 470V623A42 42 0 0 0 405 665H1726A42 42 0 0 0 1768 623V470" fill="none" stroke="#fff" strokeWidth="2" />
    <path d="M372 470V623A33 33 0 0 0 405 656H1726A33 33 0 0 0 1759 623V470" fill="none" stroke="#ebe800" strokeWidth="2" />
    <path d="M231 470.5H1834" stroke="#b3bfcd" />
    <path d="M402 621h4v4h-4zM1724 621h4v4h-4z" fill="#ebe800" />
    <path d="M359 619h8v8h-8zM1722 661h8v8h-8z" fill="#ffc400" stroke="#55534f" strokeWidth="1.5" />
    <path d="M395 661h18v9h-18zM1764 619h8v11h-8z" fill="#2d3441" />
    <path d="M401 667h6v1h-6zM1765 623h3v1h-3z" fill="#ffc400" />
    {marks.map(([x1, x2, y]) => (
      <g key={`${x1}-${y}`}>
        <path d={`M${x1 - 1} ${y + 1}H${x2 + 1}`} stroke="#1d222b" strokeWidth="3" opacity=".6" />
      </g>
    ))}
    {marks.map(([x1, x2, y]) => (
      <path key={`${x1}-${y}`} d={`M${x1} ${y + 0.5}H${x2}`} stroke="#fff" />
    ))}
    <g stroke="#06b032" fill="none">
      <path d="M1064.5 601V717" />
      <path d="M1062 642.500h5l-2.500 12zM1062 676.500h5l-2.500-12z" />
      <path d="M1066.500 664v-8l-5 5h7" strokeWidth="1.500" />
    </g>
    <path d="M283 966V947" stroke="#a00d12" />
    <path d="M283 938l5 11h-10z" fill="#a00d12" />
    <circle cx="283" cy="968" r="6" fill="#0a9d10" />
    <path d="M283 968H263" stroke="#1010b8" />
    <path d="M252 968l11-5v11z" fill="#0c0ca8" />
    <g fontFamily="Liberation Sans, sans-serif" fontSize="12" textAnchor="middle">
      <text x="283" y="937" fill="#c81418">X</text>
      <text x="248" y="972" fill="#1f1fe0">Z</text>
    </g>
  </Drawing>
);

/* document tabs and status */

const DocTabs = styled.div`
  display: flex;
  align-items: stretch;
  height: 30px;
  background: #232830;
  color: #a9b4c4;
`;

const HomeTab = styled.button`
  display: grid;
  place-items: center;
  width: 34px;
  background: #485062;
`;

const DocTab = styled.button`
  display: flex;
  align-items: center;
  gap: 9px;
  padding: 2px 9px 0 10px;
  background: #3b4453;
  border-bottom: 4px solid #38abe0;
  color: #fff;
  svg {
    color: #8c93a0;
  }
`;

const DocMenu = styled.button`
  margin: 0 3px 0 auto;
`;

const StatusBar = styled.footer`
  display: flex;
  height: 29px;
  padding-top: 2px;
  background: #2e3440;
`;

const Prompt = styled.div`
  width: 448px;
  padding-top: 4px;
`;

const StatusTools = styled.div`
  display: flex;
  align-items: center;
  flex: 1;
  padding-left: 1px;
  border-left: 1px solid #d5d8dd;
`;

const StatusCell = styled.div`
  width: ${(p) => p.$w}px;
  padding: 3px 0 0 ${(p) => p.$pad || 4}px;
  border-left: 1px solid #d5d8dd;
`;

const tabs = [
  "3D Model", "Sketch", "Annotate", "Inspect", "Tools", "Manage",
  "View", "Environments", "Get Started", "Collaborate",
];

const App = () => {
  return (
    <Page>
      <Global />
      <TitleBar>
        <Tool $w={32} aria-label="Inventor"><Icon name="logo" /></Tool>
        <Tool $w={34} aria-label="New"><Icon name="newDoc" /></Tool>
        <Tool $w={13} aria-label="New options"><Caret /></Tool>
        <Tool $w={30} aria-label="Open"><Icon name="open" /></Tool>
        <Tool aria-label="Save"><Icon name="save" /></Tool>
        <Tool $w={31} aria-label="Undo"><Icon name="undo" /></Tool>
        <Tool $w={13} aria-label="Undo history"><Caret /></Tool>
        <Tool $w={32} aria-label="Redo"><Icon name="redo" /></Tool>
        <Tool $w={13} aria-label="Redo history"><Caret /></Tool>
        <Tool $w={6} as="span" />
        <Rule $h={27} />
        <Tool $w={36} aria-label="Home"><Icon name="home" /></Tool>
        <Tool $w={26} aria-label="Update"><Icon name="bolt" /></Tool>
        <Tool $w={18} aria-label="Update options"><Caret /></Tool>
        <Tool aria-label="Select"><Icon name="select" /></Tool>
        <Tool $w={8} aria-label="Select options"><Caret /></Tool>
        <Tool $w={40} aria-label="Parts"><Icon name="cylinders" /></Tool>
        <Tool $w={20} aria-label="Material browser"><Icon name="ball" /></Tool>
        <Combo $muted>
          <select aria-label="Material"><option>Material</option></select>
          <Caret $s={5} />
        </Combo>
        <Tool $w={26} aria-label="Appearance browser"><Icon name="wheel" /></Tool>
        <Combo>
          <Icon name="metal" size={18} />
          <select aria-label="Appearance"><option>*Stainless -</option></select>
          <Caret $s={5} />
        </Combo>
        <Tool $w={26} aria-label="Adjust">
          <Svg $s={20} viewBox="0 0 20 20">
            <g transform="scale(.9)">{icons.wheel}</g>
            <path d="M10 16h10" stroke="#999" strokeWidth="2" />
            <path d="M12 13h5v4l-3 3-2-3z" fill={B} />
          </Svg>
        </Tool>
        <Tool $w={34} aria-label="Clear">
          <Svg $s={20} viewBox="0 0 20 20">
            <g transform="scale(.9)">{icons.wheel}</g>
            <path d="M13 12l6 7M19 12l-6 7" stroke="#e04a50" strokeWidth="3" />
          </Svg>
        </Tool>
        <Tool $w={28} aria-label="Parameters"><Fx>fx</Fx></Tool>
        <Tool $w={28} aria-label="Add"><Icon name="plus" /></Tool>
        <Tool $w={26} aria-label="Customize"><Icon name="overflow" size={18} /></Tool>
        <Title>Straight-Four Engine Head</Title>
        <SearchCaret />
        <SearchBox aria-label="Search" placeholder="Search Help &amp; Commands..." />
        <User>
          <Icon name="user" size={18} />
          patrick.ray69X...
          <Caret />
        </User>
        <Tool $w={44} aria-label="Cart"><Icon name="cart" size={18} /></Tool>
        <Rule $h={24} />
        <Tool $w={43} aria-label="Help"><Help>?</Help></Tool>
        <Tool $w={4} aria-label="Help options"><Caret /></Tool>
        <WindowTools>
          <Tool $w={36} aria-label="Minimize"><Icon name="minimize" size={14} /></Tool>
          <Tool $w={31} aria-label="Restore"><Icon name="restore" size={16} /></Tool>
          <Tool $w={27} aria-label="Close"><Icon name="close" size={18} /></Tool>
        </WindowTools>
      </TitleBar>

      <TabBar>
        <Tab $file>File</Tab>
        {tabs.map((t) => (
          <Tab key={t} $active={t === "Sketch"}>{t}</Tab>
        ))}
        <Toggle aria-label="Collapse ribbon"><span><i /></span><Caret /></Toggle>
      </TabBar>

      <Ribbon>
        <Group $w={100}>
          <GroupBody>
            <BigCmd icon="start2d" lines={["Start", "2D Sketch"]} w={99} side />
          </GroupBody>
          <GroupLabel>Sketch</GroupLabel>
        </Group>
        <Group $w={460}>
          <GroupBody $pad={1}>
            <BigCmd icon="line" lines={["Line"]} w={58} below />
            <BigCmd icon="circle" lines={["Circle"]} w={58} below />
            <BigCmd icon="arc" lines={["Arc"]} w={57} below />
            <BigCmd icon="rect" lines={["Rectangle"]} w={84} below />
            <InnerGap />
            <Stack>
              <Cmd icon="fillet" caret>Fillet</Cmd>
              <Cmd icon="textA" caret>Text</Cmd>
              <Cmd icon="point">Point</Cmd>
            </Stack>
            <InnerRule />
            <BigCmd icon="project" lines={["Project", "Geometry"]} w={97} side />
          </GroupBody>
          <GroupLabel>Create <Caret $s={5} /></GroupLabel>
        </Group>
        <Group $w={258}>
          <GroupBody $pad={3}>
            <Stack $cols="83px 84px auto">
              <Cmd icon="move">Move</Cmd>
              <Cmd icon="trim">Trim</Cmd>
              <Cmd icon="scale">Scale</Cmd>
              <Cmd icon="copy">Copy</Cmd>
              <Cmd icon="extend">Extend</Cmd>
              <Cmd icon="stretch">Stretch</Cmd>
              <Cmd icon="rotate">Rotate</Cmd>
              <Cmd icon="split">Split</Cmd>
              <Cmd icon="offset" on>Offset</Cmd>
            </Stack>
          </GroupBody>
          <GroupLabel>Modify</GroupLabel>
        </Group>
        <Group $w={123}>
          <GroupBody $pad={3}>
            <Stack>
              <Cmd icon="rectPattern">Rectangular</Cmd>
              <Cmd icon="circPattern">Circular</Cmd>
              <Cmd icon="mirror">Mirror</Cmd>
            </Stack>
          </GroupBody>
          <GroupLabel>Pattern</GroupLabel>
        </Group>
        <Group $w={248}>
          <GroupBody $pad={2}>
            <BigCmd icon="dimension" lines={["Dimension"]} w={78} gap={5} />
            <Stack $cols="43px 30px 31px 31px auto">
              <Cmd icon="autoDim" label="Automatic dimension" />
              <Cmd icon="coincident" label="Coincident" />
              <Cmd icon="collinear" label="Collinear" />
              <Cmd icon="concentric" label="Concentric" />
              <Cmd icon="lock" label="Fix" />
              <Cmd icon="showCon" label="Show constraints" />
              <Cmd icon="parallel" label="Parallel" />
              <Cmd icon="perpendicular" label="Perpendicular" />
              <Cmd icon="horizontal" label="Horizontal" />
              <Cmd icon="vertical" label="Vertical" />
              <Cmd icon="conSettings" label="Constraint settings" />
              <Cmd icon="tangent" label="Tangent" />
              <Cmd icon="smooth" label="Smooth" />
              <Cmd icon="symmetric" label="Symmetric" />
              <Cmd icon="equal" label="Equal" />
            </Stack>
          </GroupBody>
          <GroupLabel>Constrain <Caret $s={5} /></GroupLabel>
        </Group>
        <Group $w={87}>
          <GroupBody $pad={3}>
            <Stack>
              <Cmd icon="image">Image</Cmd>
              <Cmd icon="points">Points</Cmd>
              <Cmd icon="acad">ACAD</Cmd>
            </Stack>
          </GroupBody>
          <GroupLabel>Insert</GroupLabel>
        </Group>
        <Group $w={131}>
          <GroupBody $pad={3}>
            <div>
              <Stack $cols="30px auto">
                <Cmd icon="construction" label="Construction" />
                <Cmd icon="driven" label="Driven dimension" />
                <Cmd icon="centerline" label="Centerline" />
                <Cmd icon="point" label="Center point" on />
              </Stack>
              <Stack>
                <Cmd icon="showFormat">Show Format</Cmd>
              </Stack>
            </div>
          </GroupBody>
          <GroupLabel>Format <Caret $s={5} /></GroupLabel>
        </Group>
        <Group $w={54} $last>
          <GroupBody>
            <BigCmd icon="check" lines={["Finish", "Sketch"]} w={54} />
          </GroupBody>
          <ExitLabel>Exit</ExitLabel>
        </Group>
      </Ribbon>

      <Work>
        <Browser>
          <BrowserHead>
            <BrowserTab>Model <Icon name="close" size={12} /></BrowserTab>
            <Tool $w={11} aria-label="Add tab"><Icon name="add" size={10} /></Tool>
            <BrowserTools>
              <Tool $w={14} aria-label="Search"><Icon name="search" size={14} /></Tool>
              <Tool $w={16} aria-label="Menu"><Icon name="menu" size={16} /></Tool>
            </BrowserTools>
          </BrowserHead>
          <Tree>
            <Row $root><Icon name="cube" />Straight-Four Engine Head</Row>
            {treeItems.map((item) => (
              <Row key={item.text} $selected={item.selected}>
                {item.child && <Branch $trunk />}
                <Branch $end={item.end}>
                  {item.sign && (
                    <Expander aria-label={item.sign === "+" ? "Expand" : "Collapse"}>
                      <svg viewBox="0 0 11 11">
                        <path
                          d={item.sign === "+" ? "M5.500 0v11M0 5.500h11" : "M0 5.500h11"}
                          stroke="#9299a4"
                          strokeWidth="2"
                        />
                      </svg>
                    </Expander>
                  )}
                </Branch>
                <Icon name={item.icon} />
                {item.text}
              </Row>
            ))}
          </Tree>
        </Browser>

        <Stage>
          <Viewport>
            <EngineHead />
            <DocControls>
              <DocButton aria-label="Minimize document"><Icon name="minimize" size={12} /></DocButton>
              <DocButton aria-label="Tile documents"><Icon name="tiles" size={13} /></DocButton>
              <DocButton aria-label="Close document"><Icon name="close" size={14} /></DocButton>
            </DocControls>
            <ViewCube><span>BOTTOM</span></ViewCube>
            <NavBar>
              <NavDot aria-label="Close navigation"><Icon name="close" size={5} /></NavDot>
              <Icon name="wheelNav" />
              <Caret />
              <hr />
              <Icon name="hand" size={22} />
              <NavGap $h={9} />
              <Icon name="zoomNav" size={22} />
              <Caret />
              <NavGap $h={7} />
              <Icon name="orbit" size={22} />
              <Caret />
              <NavGap $h={6} />
              <Icon name="lookAt" size={20} />
              <NavDot $low aria-label="Navigation options"><Icon name="overflow" size={6} /></NavDot>
            </NavBar>
          </Viewport>
          <DocTabs>
            <HomeTab aria-label="Home"><Icon name="home" /></HomeTab>
            <DocTab>Straight-Four Engine Head.ipt <Icon name="close" size={13} /></DocTab>
            <DocMenu aria-label="Documents"><Icon name="menu" /></DocMenu>
          </DocTabs>
        </Stage>
      </Work>

      <StatusBar>
        <Prompt>Select curve to offset</Prompt>
        <StatusTools>
          <Tool aria-label="Snap to grid"><Icon name="gridSnap" /></Tool>
          <Tool aria-label="Show constraints"><Icon name="conStatus" /></Tool>
          <Tool aria-label="Dimension display"><Icon name="tolerance" /></Tool>
          <Tool $w={14} aria-label="Display options"><Caret /></Tool>
          <Tool aria-label="Slice graphics"><Icon name="slice" /></Tool>
          <Tool aria-label="Show freedom"><Icon name="dragHint" /></Tool>
          <Tool aria-label="Relax mode"><Icon name="relax" /></Tool>
        </StatusTools>
        <StatusCell $w={145}>0,000 mm, 0,000 mm</StatusCell>
        <StatusCell $w={149}>2 dimensions needed</StatusCell>
        <StatusCell $w={38} $pad={8}>1</StatusCell>
        <StatusCell $w={37} $pad={8}>1</StatusCell>
      </StatusBar>
    </Page>
  );
};

export default App;
